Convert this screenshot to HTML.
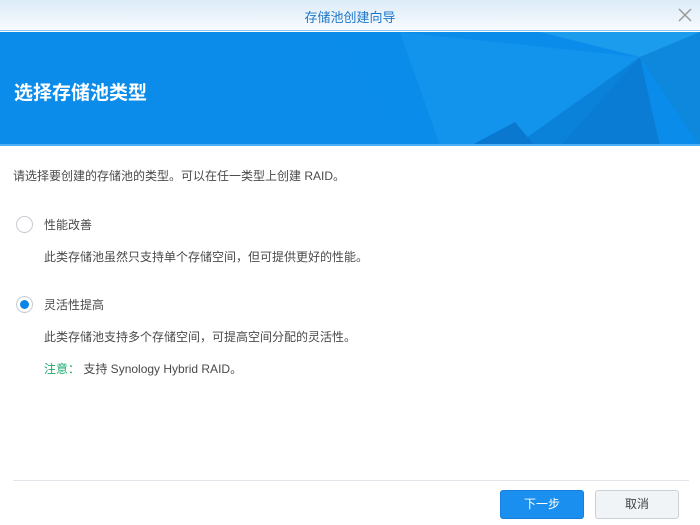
<!DOCTYPE html>
<html><head><meta charset="utf-8"><style>
*{margin:0;padding:0;box-sizing:border-box}
body{width:700px;height:525px;background:#fff;font-family:"Liberation Sans","Noto Sans CJK SC",sans-serif;position:relative;overflow:hidden;color:#4a4a4a;font-size:12px}
.t{position:absolute;white-space:nowrap}
#bar{position:absolute;left:0;top:0;width:700px;height:31px;background:linear-gradient(#dcebf8,#f7fbfe);border-bottom:1px solid #8cc6f2}
#ban{position:absolute;left:0;top:32px;width:700px;height:114px;background:#0a8cea;overflow:hidden;border-bottom:2px solid #4db0f4}
.r{position:absolute;width:17px;height:17px;border-radius:50%;border:1px solid #c8ccd2;background:#fff}
.btn{position:absolute;top:490px;height:29px;width:84px;border-radius:3px;text-align:center;line-height:27px;font-size:12px}
</style></head><body>
<div id="bar"><div class="t" style="left:0;width:700px;text-align:center;top:7px;font-size:13px;color:#1f77c9">存储池创建向导</div>
<svg width="14" height="14" style="position:absolute;left:678px;top:8px"><path d="M1 1L13 13M13 1L1 13" stroke="#9a9a9a" stroke-width="1.5"/></svg></div>
<div id="ban">
<svg width="700" height="114" style="position:absolute;left:0;top:0">
<polygon points="330,0 410,114 0,114 0,0" fill="#0b8bea"/>
<polygon points="400,0 640,25 515,114 440,114" fill="#1596ec" opacity=".7"/>
<polygon points="540,0 700,0 640,25" fill="#28a6ef" opacity=".6"/>
<polygon points="640,25 700,0 700,114" fill="#0e88dd"/>
<polygon points="515,114 640,25 560,114" fill="#0b82d9"/>
<polygon points="640,25 660,114 560,114" fill="#0a7cd3"/>
<polygon points="470,114 515,90 535,114" fill="#0a78cf"/>
</svg>
<div class="t" style="left:14px;top:46px;font-size:19px;font-weight:bold;color:#fff">选择存储池类型</div></div>
<div class="t" style="left:13px;top:167px">请选择要创建的存储池的类型。可以在任一类型上创建 RAID。</div>
<div class="r" style="left:16px;top:216px"></div>
<div class="t" style="left:44px;top:216px">性能改善</div>
<div class="t" style="left:44px;top:248px">此类存储池虽然只支持单个存储空间，但可提供更好的性能。</div>
<div class="r" style="left:16px;top:296px"><div style="position:absolute;left:3px;top:3px;width:9px;height:9px;border-radius:50%;background:#0a84e6"></div></div>
<div class="t" style="left:44px;top:296px">灵活性提高</div>
<div class="t" style="left:44px;top:328px">此类存储池支持多个存储空间，可提高空间分配的灵活性。</div>
<div class="t" style="left:44px;top:360px"><span style="color:#1eaa6e">注意：</span> 支持 Synology Hybrid RAID。</div>
<div style="position:absolute;left:13px;top:480px;width:676px;height:1px;background:#e2e5e9"></div>
<div class="btn" style="left:500px;background:#1a8ff0;border:1px solid #1480dc;color:#fff">下一步</div>
<div class="btn" style="left:595px;background:#f1f4f7;border:1px solid #c9d0d8;color:#444">取消</div>
</body></html>
